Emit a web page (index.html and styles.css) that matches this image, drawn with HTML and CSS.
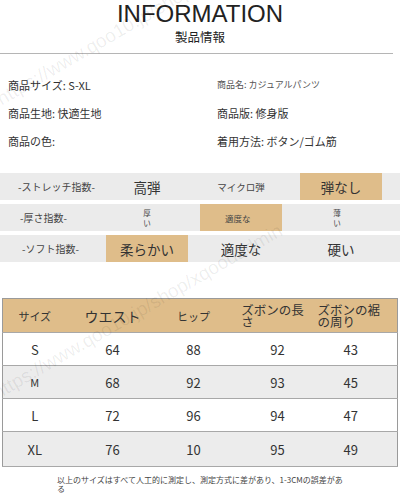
FILE: index.html
```html
<!DOCTYPE html>
<html lang="ja">
<head>
<meta charset="utf-8">
<link rel="stylesheet" href="styles.css">
</head>
<body>
<div class="page">
  <header class="head">
    <h1 class="title">INFORMATION</h1>
    <div class="subtitle">製品情報</div>
  </header>
  <hr class="rule">
  <section class="info">
    <div class="cell">商品サイズ: S-XL</div>
    <div class="cell tiny">商品名: カジュアルパンツ</div>
    <div class="cell">商品生地: 快適生地</div>
    <div class="cell">商品版: 修身版</div>
    <div class="cell">商品の色:</div>
    <div class="cell">着用方法: ボタン/ゴム筋</div>
  </section>
  <section class="scales">
    <div class="bar">
      <div class="label l1">-ストレッチ指数-</div>
      <div class="col"><div class="v big">高弾</div></div>
      <div class="col"><div class="v sm">マイクロ弾</div></div>
      <div class="col"><div class="v big on">弾なし</div></div>
    </div>
    <div class="bar">
      <div class="label l2">-厚さ指数-</div>
      <div class="col"><div class="v xs">厚<br>い</div></div>
      <div class="col"><div class="v sm2 on">適度な</div></div>
      <div class="col"><div class="v xs shift">薄<br>い</div></div>
    </div>
    <div class="bar">
      <div class="label l3">-ソフト指数-</div>
      <div class="col"><div class="v big on">柔らかい</div></div>
      <div class="col"><div class="v big">適度な</div></div>
      <div class="col"><div class="v big">硬い</div></div>
    </div>
  </section>
  <table class="size">
    <colgroup>
      <col class="c1"><col class="c2"><col class="c3"><col class="c4"><col class="c5">
    </colgroup>
    <thead>
      <tr class="hrow">
        <th class="h-s">サイズ</th>
        <th class="h-w">ウエスト</th>
        <th class="h-s">ヒップ</th>
        <th class="h-m"><span class="wrap">ズボンの長<br>さ</span></th>
        <th class="h-m h-last"><span class="wrap">ズボンの裾<br>の周り</span></th>
      </tr>
    </thead>
    <tbody>
      <tr class="white"><td>S</td><td>64</td><td>88</td><td class="d4">92</td><td class="d5">43</td></tr>
      <tr class="gray"><td class="m">M</td><td>68</td><td>92</td><td class="d4">93</td><td class="d5">45</td></tr>
      <tr class="white"><td>L</td><td>72</td><td>96</td><td class="d4">94</td><td class="d5">47</td></tr>
      <tr class="gray tall"><td>XL</td><td>76</td><td>10</td><td class="d4">95</td><td class="d5">49</td></tr>
    </tbody>
  </table>
  <p class="note">以上のサイズはすべて人工的に測定し、測定方式に差があり、1-3CMの誤差がある</p>
  <div class="wm wm1">https://www.qoo10.jp/shop/xqoodadmin</div>
  <div class="wm wm2">https://www.qoo10.jp/shop/xqoodadmin</div>
</div>
</body>
</html>
```

FILE: styles.css
```css
html, body {
  margin: 0;
  padding: 0;
  background: #fff;
}
body {
  font-family: "Noto Sans CJK JP", "Noto Sans", sans-serif;
  color: #333;
}
.page {
  position: relative;
  width: 400px;
  height: 500px;
  overflow: hidden;
}
.head {
  text-align: center;
}
.title {
  margin: 0;
  font-family: "Liberation Sans", Arial, sans-serif;
  font-weight: normal;
  font-size: 24px;
  line-height: 28px;
  color: #222;
}
.subtitle {
  margin-top: 2px;
  font-size: 12.5px;
  line-height: 14px;
  color: #222;
}
.rule {
  border: 0;
  border-top: 1px solid #b5b5b5;
  height: 0;
  margin: 9px 7px 0 0;
}
.info {
  margin-top: 17px;
  padding-left: 8px;
  display: grid;
  grid-template-columns: 209px 1fr;
  grid-auto-rows: 28px;
  align-items: center;
}
.cell {
  font-size: 11px;
  line-height: 14px;
  color: #333;
  white-space: nowrap;
}
.cell.tiny {
  font-size: 9px;
  color: #555;
}
.scales {
  margin-top: 18px;
  display: flex;
  flex-direction: column;
  gap: 4px;
}
.bar {
  height: 27px;
  background: #ebebeb;
  display: grid;
  grid-template-columns: 106px 94px 100px 1fr;
  align-items: stretch;
}
.label {
  font-size: 10px;
  color: #444;
  display: flex;
  align-items: center;
  white-space: nowrap;
}
.l1 { padding-left: 18px; }
.l2 { padding-left: 20px; }
.l3 { padding-left: 22px; }
.col {
  display: flex;
}
.v {
  width: 82px;
  display: flex;
  align-items: center;
  justify-content: center;
  text-align: center;
  color: #333;
}
.v.on {
  background: #dfbd8a;
}
.v.big {
  font-size: 13.5px;
}
.v.sm {
  font-size: 9.5px;
  color: #444;
}
.v.sm2 {
  font-size: 8.5px;
  color: #444;
  justify-content: flex-start;
  padding-left: 25px;
  box-sizing: border-box;
}
.v.xs {
  font-size: 7.5px;
  line-height: 9.5px;
  color: #444;
}
.v.shift {
  width: 74px;
}
.size {
  margin: 36px 0 0 2px;
  width: 395px;
  border-collapse: collapse;
  table-layout: fixed;
  border: 1px solid #9a9a9a;
}
.c1 { width: 64px; }
.c2 { width: 92px; }
.c3 { width: 70px; }
.c4 { width: 88px; }
.c5 { width: 81px; }
.size th, .size td {
  padding: 0;
  text-align: center;
  font-weight: normal;
  border-bottom: 1px solid #a8a8a8;
  color: #333;
}
.size td {
  font-size: 13px;
}
.size td.d4 {
  padding-left: 10px;
}
.size td.d5 {
  padding-right: 12px;
}
.size th.h-last {
  padding-right: 16px;
}
.hrow {
  height: 34px;
  background: #dfbd8a;
}
.h-s { font-size: 11px; line-height: 16px; }
.h-w { font-size: 14px; line-height: 20px; }
.h-m {
  font-size: 12.5px;
  line-height: 12px;
}
.wrap {
  display: inline-block;
  text-align: left;
  white-space: nowrap;
  padding-top: 1px;
}
.size tbody tr {
  height: 33px;
}
.size tbody tr.tall {
  height: 35px;
}
.white { background: #fff; }
.gray { background: #ececec; }
.size td.m {
  font-size: 11px;
}
.note {
  margin: 9px 0 0 57px;
  width: 292px;
  font-size: 8px;
  line-height: 8.5px;
  color: #444;
}
.wm {
  position: absolute;
  left: 0;
  top: 0;
  font-family: "Liberation Sans", Arial, sans-serif;
  font-size: 19px;
  color: rgba(0, 0, 0, 0.07);
  white-space: nowrap;
  transform-origin: 0 100%;
  transform: rotate(-30deg);
  pointer-events: none;
}
.wm1 {
  top: 88px;
  left: 4px;
}
.wm2 {
  top: 382px;
  left: 0;
}
```
